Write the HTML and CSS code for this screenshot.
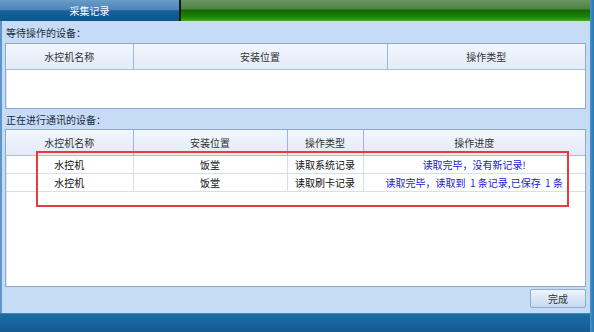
FILE: index.html
```html
<!DOCTYPE html>
<html lang="zh-CN">
<head>
<meta charset="utf-8">
<title>采集记录</title>
<link rel="stylesheet" href="styles.css">
</head>
<body>
<div class="window">
  <div class="main">
    <div class="titlebar">
      <div class="tab">采集记录</div>
      <div class="sep"></div>
      <div class="greenbar"></div>
    </div>
    <div class="content">
      <div class="label label-first">等待操作的设备：</div>
      <div class="grid grid-wait">
        <table class="tbl">
          <colgroup><col class="w1"><col class="w2a"><col></colgroup>
          <thead><tr><th>水控机名称</th><th>安装位置</th><th>操作类型</th></tr></thead>
        </table>
      </div>
      <div class="label label-second">正在进行通讯的设备：</div>
      <div class="grid grid-run">
        <table class="tbl">
          <colgroup><col class="w1"><col class="w2b"><col class="w3b"><col></colgroup>
          <thead><tr><th>水控机名称</th><th>安装位置</th><th>操作类型</th><th>操作进度</th></tr></thead>
          <tbody>
            <tr><td>水控机</td><td>饭堂</td><td>读取系统记录</td><td class="prog">读取完毕，没有新记录!</td></tr>
            <tr><td>水控机</td><td>饭堂</td><td>读取刷卡记录</td><td class="prog">读取完毕，读取到&nbsp; 1 条记录,已保存&nbsp; 1 条</td></tr>
          </tbody>
        </table>
      </div>
      <div class="actions"><button class="btn">完成</button></div>
      <div class="mark"></div>
    </div>
    <div class="bottombar"></div>
  </div>
  <div class="edge"></div>
</div>
</body>
</html>
```
FILE: styles.css
```css
* { box-sizing: border-box; }
html, body { margin: 0; padding: 0; }
body {
  width: 594px;
  height: 332px;
  overflow: hidden;
  font-family: "Noto Sans CJK SC", "Microsoft YaHei", sans-serif;
  font-size: 10px;
  color: #222;
}
.window { display: flex; width: 594px; height: 332px; }
.main { width: 590px; display: flex; flex-direction: column; }
.edge {
  width: 4px;
  background: linear-gradient(to right, #4a92c8, #2474b0);
}
.titlebar { height: 21px; display: flex; }
.tab {
  width: 179px;
  color: #fff;
  display: flex;
  align-items: center;
  justify-content: center;
  background: linear-gradient(to bottom, #6a9cc6 0%, #4c86b8 45%, #17609a 52%, #0c5790 100%);
}
.sep { width: 2px; background: #151a18; }
.greenbar {
  flex: 1;
  background: linear-gradient(to bottom, #6c9464 0%, #4f8444 40%, #0e6a00 50%, #1c8208 80%, #44a82c 100%);
}
.content {
  position: relative;
  flex: 1;
  background: #c5dbf6;
  border-left: 2px solid #5b97cb;
  padding: 0 4px 0 3px;
  display: flex;
  flex-direction: column;
}
.label {
  padding-left: 1px;
  color: #1f2a3a;
}
.label-first { height: 22px; line-height: 24px; }
.label-second { height: 20px; line-height: 21px; }
.grid {
  background: #fff;
  border: 1px solid #90a9cb;
  box-shadow: inset 1px 0 0 #dce8f6;
}
.grid-wait { height: 66px; }
.grid-run { height: 158px; }
.tbl {
  width: 100%;
  border-collapse: collapse;
  table-layout: fixed;
}
.w1 { width: 127px; }
.w2a { width: 254px; }
.w2b { width: 154px; }
.w3b { width: 76px; }
.tbl th {
  height: 25px;
  font-weight: normal;
  color: #333;
  background: linear-gradient(to bottom, #f2f6fc, #e2ebf8);
  border-bottom: 1px solid #a9c1e0;
  border-left: 1px solid #9db6d8;
  padding: 0;
}
.tbl th:first-child { border-left: none; }
.tbl td {
  height: 18px;
  padding: 0;
  text-align: center;
  color: #111;
  border-bottom: 1px solid #d3e0f1;
  border-left: 1px solid #d3e0f1;
  white-space: nowrap;
}
.tbl td:first-child { border-left: none; }
.tbl td.prog { color: #1b1bd0; }
.actions {
  display: flex;
  justify-content: flex-end;
  padding-top: 2px;
}
.btn {
  width: 56px;
  height: 19px;
  padding: 0;
  font: inherit;
  color: #333;
  border: 1px solid #8fabcd;
  border-radius: 2px;
  background: linear-gradient(to bottom, #eef4fc, #c6daf2);
}
.mark {
  position: absolute;
  left: 34px;
  top: 130px;
  width: 533px;
  height: 56px;
  border: 2px solid #e63b3d;
}
.bottombar {
  height: 19px;
  border-top: 1px solid #3f86bb;
  background: linear-gradient(to bottom, #1d6ca4, #145b92);
}
```
